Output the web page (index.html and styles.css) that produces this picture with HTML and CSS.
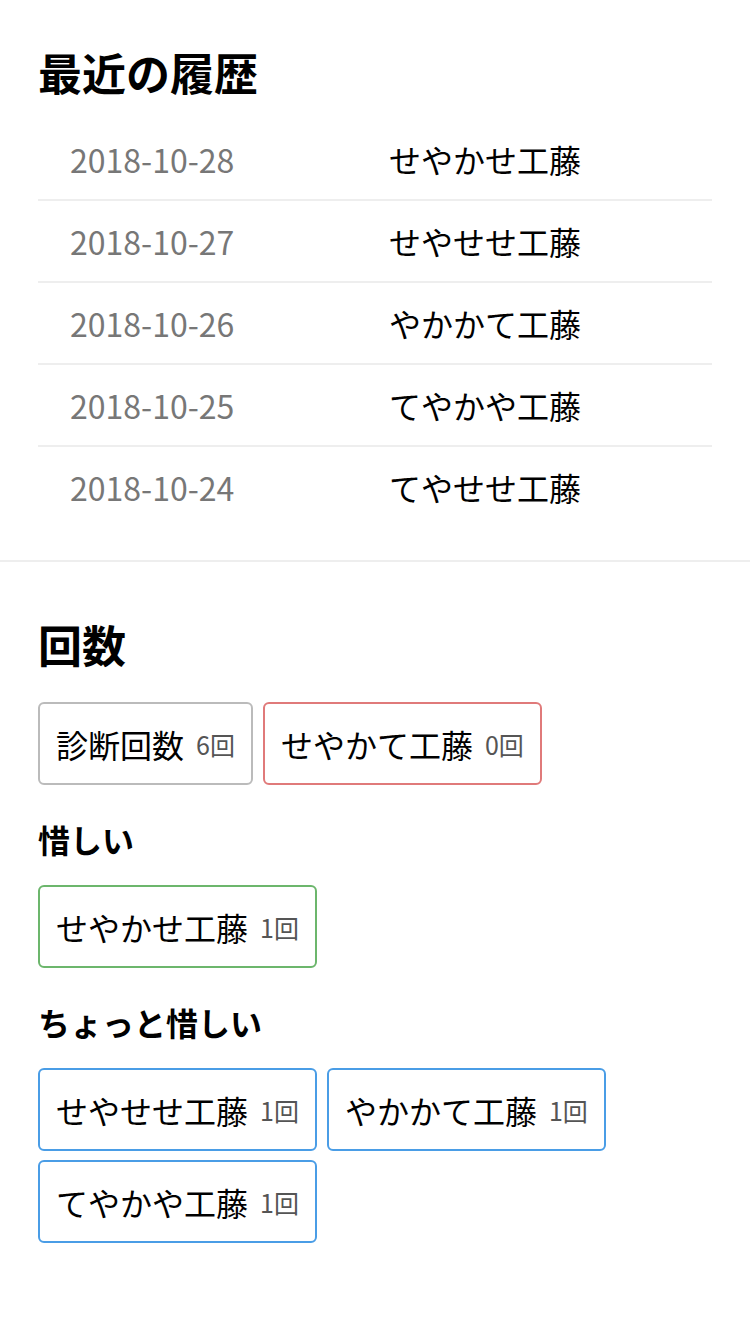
FILE: index.html
```html
<!DOCTYPE html>
<html lang="ja">
<head>
<meta charset="UTF-8">
<meta name="viewport" content="width=device-width, initial-scale=1.0">
<title>履歴</title>
<link rel="stylesheet" href="styles.css">
</head>
<body>

<section class="history">
  <h2 class="title">最近の履歴</h2>
  <div class="history-list">
    <div class="history-row"><span class="date">2018-10-28</span><span class="name">せやかせ工藤</span></div>
    <div class="history-row"><span class="date">2018-10-27</span><span class="name">せやせせ工藤</span></div>
    <div class="history-row"><span class="date">2018-10-26</span><span class="name">やかかて工藤</span></div>
    <div class="history-row"><span class="date">2018-10-25</span><span class="name">てやかや工藤</span></div>
    <div class="history-row"><span class="date">2018-10-24</span><span class="name">てやせせ工藤</span></div>
  </div>
</section>

<section class="counts">
  <h2 class="title">回数</h2>
  <div class="tags">
    <div class="tag tag-gray">診断回数<span class="num">6回</span></div>
    <div class="tag tag-red">せやかて工藤<span class="num">0回</span></div>
  </div>

  <h3 class="subtitle">惜しい</h3>
  <div class="tags">
    <div class="tag tag-green">せやかせ工藤<span class="num">1回</span></div>
  </div>

  <h3 class="subtitle">ちょっと惜しい</h3>
  <div class="tags">
    <div class="tag tag-blue">せやせせ工藤<span class="num">1回</span></div>
    <div class="tag tag-blue">やかかて工藤<span class="num">1回</span></div>
    <div class="tag tag-blue">てやかや工藤<span class="num">1回</span></div>
  </div>
</section>

</body>
</html>
```

FILE: styles.css
```css
body {
  margin: 0;
  background-color: #fff;
  color: #000;
  font-family: "Noto Sans CJK JP", "Noto Sans", sans-serif;
}

.history {
  padding: 44px 38px 33px;
  border-bottom: 2px solid #eee;
}

.title {
  margin: 0;
  font-size: 44px;
  font-weight: bold;
  line-height: 57px;
}

.history-list {
  margin-top: 18px;
}

.history-row {
  display: grid;
  grid-template-columns: 351px 1fr;
  align-items: center;
  height: 80px;
  font-size: 32px;
  border-bottom: 2px solid #eee;
}

.history-row:last-child {
  border-bottom: none;
}

.date {
  padding-left: 32px;
  color: #777;
}

.counts {
  padding: 54px 38px 80px;
}

.counts .tags:first-of-type {
  margin-top: 29px;
}

.subtitle {
  margin: 32px 0 23px;
  font-size: 32px;
  font-weight: bold;
  line-height: 45px;
}

.tags {
  display: flex;
  flex-wrap: wrap;
  gap: 9px 10px;
}

.tag {
  display: flex;
  align-items: center;
  box-sizing: border-box;
  height: 83px;
  padding: 0 16px;
  border: 2px solid #bbb;
  border-radius: 6px;
  font-size: 32px;
}

.tag .num {
  margin-left: 12px;
  font-size: 25px;
  color: #555;
}

.tag-gray {
  border-color: #bbb;
}

.tag-red {
  border-color: #e07a7a;
}

.tag-green {
  border-color: #6cb66c;
}

.tag-blue {
  border-color: #4a9de6;
}
```
